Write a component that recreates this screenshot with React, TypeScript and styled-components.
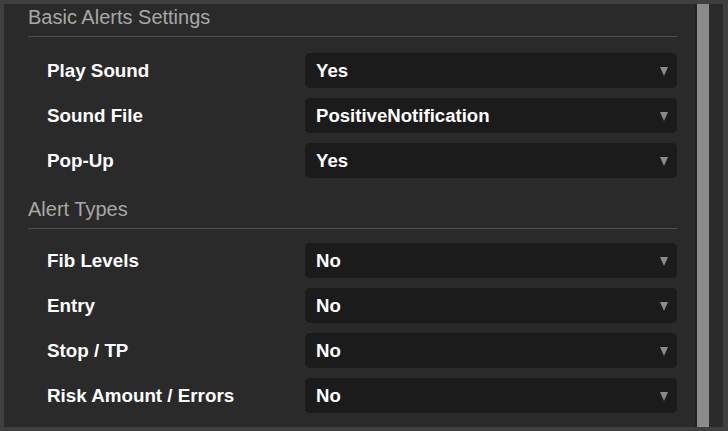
import React from "react";
import styled, { createGlobalStyle } from "styled-components";

const Global = createGlobalStyle`
  html, body { margin: 0; padding: 0; background: #3f3f3f; }
  body { font-family: "Liberation Sans", Arial, sans-serif; }
  * { box-sizing: border-box; }
`;

const Frame = styled.div`
  width: 728px;
  height: 431px;
  display: flex;
  background: #2a2a2a;
  border-style: solid;
  border-color: #3f3f3f;
  border-width: 4px 5px 4px 4px;
  overflow: hidden;
`;

const Content = styled.div`
  flex: 1;
  padding: 1px 18px 0 24px;
  display: flex;
  flex-direction: column;
`;

const Section = styled.section<{ $gap?: number }>`
  display: flex;
  flex-direction: column;
  margin-top: ${(p) => p.$gap ?? 0}px;
`;

const Heading = styled.div`
  font-size: 20px;
  line-height: 24px;
  color: #a8a8a8;
`;

const Divider = styled.div`
  height: 1px;
  margin-top: 7px;
  background: #4d4d4d;
`;

const Rows = styled.div<{ $top: number }>`
  display: grid;
  grid-template-columns: 258px 1fr;
  row-gap: 10px;
  margin-top: ${(p) => p.$top}px;
  padding-left: 19px;
  align-items: center;
`;

const Label = styled.div`
  font-size: 18.8px;
  font-weight: 700;
  color: #ffffff;
  line-height: 22px;
`;

const SelectBox = styled.div`
  height: 35px;
  background: #1b1b1b;
  border-radius: 5px;
  display: flex;
  align-items: center;
  justify-content: space-between;
  padding: 0 9px 0 11px;
  font-size: 18.6px;
  font-weight: 700;
  color: #ffffff;
`;

const Arrow = styled.span`
  width: 0;
  height: 0;
  border-left: 4px solid transparent;
  border-right: 4px solid transparent;
  border-top: 9px solid #8a8a8a;
  margin-top: 1px;
`;

const Scrollbar = styled.div`
  width: 28px;
  display: flex;
  flex-shrink: 0;
`;

const ScrollEdge = styled.div`
  width: 2px;
  background: #212121;
`;

const Thumb = styled.div`
  width: 12px;
  background: #8b8b8b;
`;

const Track = styled.div`
  flex: 1;
  background: #2b2b2b;
`;

type Row = { label: string; value: string };

const basic: Row[] = [
  { label: "Play Sound", value: "Yes" },
  { label: "Sound File", value: "PositiveNotification" },
  { label: "Pop-Up", value: "Yes" },
];

const types: Row[] = [
  { label: "Fib Levels", value: "No" },
  { label: "Entry", value: "No" },
  { label: "Stop / TP", value: "No" },
  { label: "Risk Amount / Errors", value: "No" },
];

function SettingsSection({
  title,
  rows,
  gap,
  rowsTop,
}: {
  title: string;
  rows: Row[];
  gap?: number;
  rowsTop: number;
}) {
  return (
    <Section $gap={gap}>
      <Heading>{title}</Heading>
      <Divider />
      <Rows $top={rowsTop}>
        {rows.map((r) => (
          <React.Fragment key={r.label}>
            <Label>{r.label}</Label>
            <SelectBox>
              <span>{r.value}</span>
              <Arrow />
            </SelectBox>
          </React.Fragment>
        ))}
      </Rows>
    </Section>
  );
}

export default function App() {
  return (
    <>
      <Global />
      <Frame>
        <Content>
          <SettingsSection title="Basic Alerts Settings" rows={basic} rowsTop={16} />
          <SettingsSection title="Alert Types" rows={types} gap={19} rowsTop={14} />
        </Content>
        <Scrollbar>
          <ScrollEdge />
          <Thumb />
          <Track />
        </Scrollbar>
      </Frame>
    </>
  );
}
